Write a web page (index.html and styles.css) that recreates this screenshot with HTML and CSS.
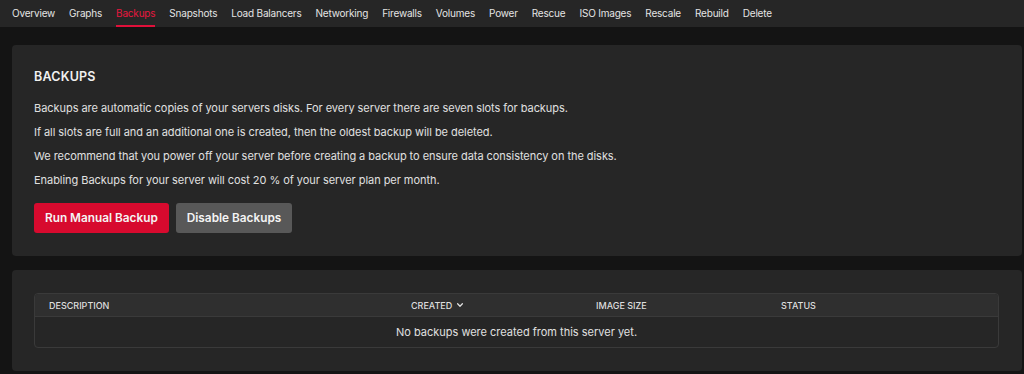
FILE: index.html
```html
<!DOCTYPE html>
<html lang="en">
<head>
<meta charset="utf-8">
<title>Backups</title>
<link rel="stylesheet" href="styles.css">
</head>
<body>
<nav class="tabs">
  <a class="tab">Overview</a>
  <a class="tab">Graphs</a>
  <a class="tab active">Backups</a>
  <a class="tab">Snapshots</a>
  <a class="tab">Load Balancers</a>
  <a class="tab">Networking</a>
  <a class="tab">Firewalls</a>
  <a class="tab">Volumes</a>
  <a class="tab">Power</a>
  <a class="tab">Rescue</a>
  <a class="tab">ISO Images</a>
  <a class="tab">Rescale</a>
  <a class="tab">Rebuild</a>
  <a class="tab">Delete</a>
</nav>
<main class="content">
  <section class="card info">
    <h2 class="title">BACKUPS</h2>
    <p class="text">Backups are automatic copies of your servers disks. For every server there are seven slots for backups.</p>
    <p class="text">If all slots are full and an additional one is created, then the oldest backup will be deleted.</p>
    <p class="text">We recommend that you power off your server before creating a backup to ensure data consistency on the disks.</p>
    <p class="text">Enabling Backups for your server will cost 20 % of your server plan per month.</p>
    <div class="actions">
      <button class="btn btn-primary">Run Manual Backup</button>
      <button class="btn btn-secondary">Disable Backups</button>
    </div>
  </section>
  <section class="card list">
    <div class="table">
      <div class="thead">
        <div class="th col-desc">DESCRIPTION</div>
        <div class="th col-created">CREATED <svg class="chev" viewBox="0 0 10 10" width="8" height="8"><path d="M2 3.5 L5 6.5 L8 3.5" fill="none" stroke="currentColor" stroke-width="1.6" stroke-linecap="round" stroke-linejoin="round"/></svg></div>
        <div class="th col-size">IMAGE SIZE</div>
        <div class="th col-status">STATUS</div>
      </div>
      <div class="empty">No backups were created from this server yet.</div>
    </div>
  </section>
</main>
</body>
</html>
```
FILE: styles.css
```css
html, body {
  margin: 0;
  padding: 0;
  background: #141414;
  color: #e2e2e2;
  font-family: Inter, "Noto Sans", sans-serif;
}

.tabs {
  display: flex;
  align-items: stretch;
  gap: 14px;
  height: 27px;
  padding: 0 12px;
  background: #262626;
  box-sizing: border-box;
}

.tab {
  display: flex;
  align-items: center;
  font-size: 10px;
  letter-spacing: -0.2px;
  color: #e4e4e4;
  border-bottom: 2px solid transparent;
  padding-top: 1px;
  box-sizing: border-box;
  cursor: pointer;
}

.tab.active {
  color: #e8173f;
  border-bottom-color: #e0103a;
}

.content {
  display: flex;
  flex-direction: column;
  gap: 14px;
  padding: 18px 2px 0 12px;
}

.card {
  background: #262626;
  border-radius: 4px;
}

.info {
  padding: 24px 22px 23px;
}

.title {
  margin: 0 0 11px;
  font-size: 12.5px;
  font-weight: 600;
  line-height: 16px;
  color: #f0f0f0;
  letter-spacing: 0.2px;
}

.text {
  margin: 0;
  font-size: 11px;
  line-height: 24px;
  letter-spacing: -0.05px;
  color: #e0e0e0;
}

.actions {
  display: flex;
  gap: 7px;
  margin-top: 11px;
}

.btn {
  height: 30px;
  padding: 0 11px;
  border: none;
  border-radius: 3px;
  font-family: Inter, "Noto Sans", sans-serif;
  font-size: 11.8px;
  font-weight: 600;
  color: #f4f4f4;
  cursor: pointer;
}

.btn-primary {
  background: #d70a2e;
}

.btn-secondary {
  background: #585858;
}

.list {
  padding: 23px 23px 23px 22px;
}

.table {
  border: 1px solid #3a3a3a;
  border-radius: 4px;
  overflow: hidden;
}

.thead {
  display: flex;
  height: 22px;
  align-items: center;
  background: #2f2f2f;
  border-bottom: 1px solid #3a3a3a;
}

.th {
  font-size: 9px;
  font-weight: 500;
  color: #dedede;
  padding-left: 14px;
  box-sizing: border-box;
  display: flex;
  align-items: center;
  gap: 4px;
}

.col-desc { width: 362px; }
.col-created { width: 185px; }
.col-size { width: 185px; }
.col-status { flex: 1; }

.chev {
  display: block;
}

.empty {
  height: 30px;
  display: flex;
  align-items: center;
  justify-content: center;
  font-size: 11px;
  color: #e0e0e0;
}
```
